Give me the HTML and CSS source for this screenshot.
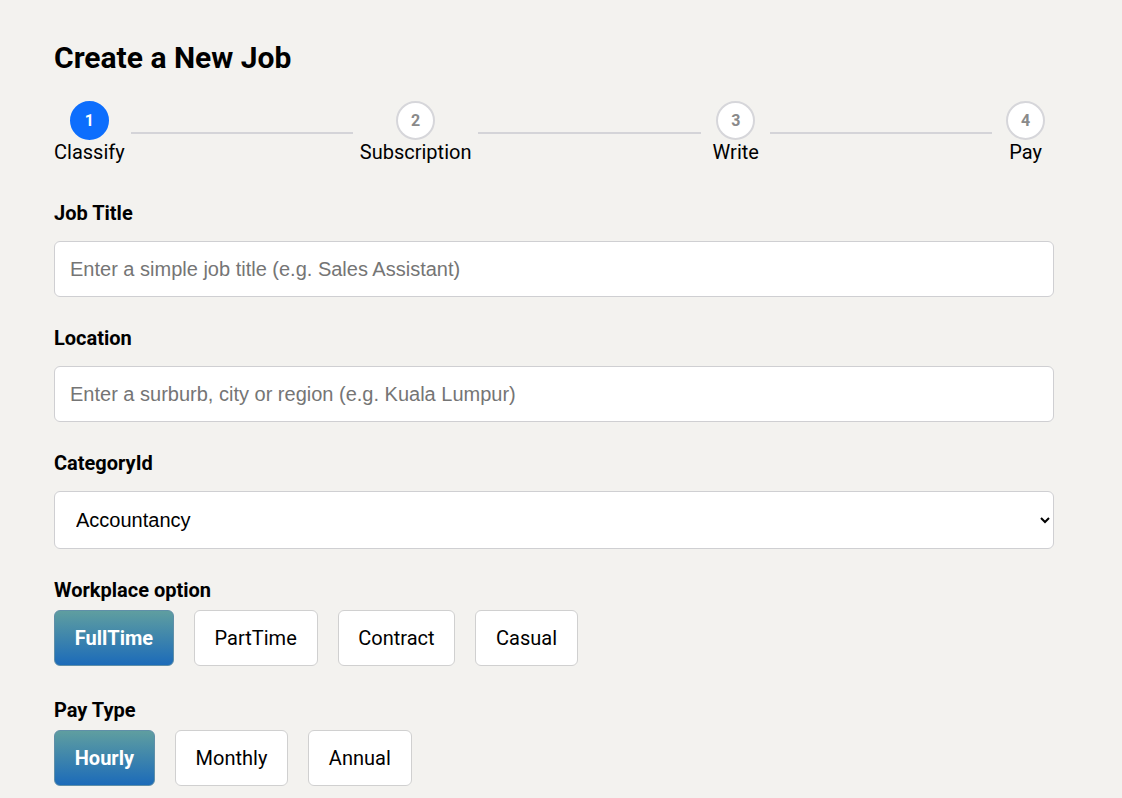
FILE: index.html
```html
<!DOCTYPE html>
<html lang="en">
<head>
<meta charset="utf-8">
<title>Create a New Job</title>
<link rel="stylesheet" href="styles.css">
</head>
<body>
<main class="page">
  <h1 class="title">Create a New Job</h1>

  <div class="stepper">
    <div class="step active"><span class="dot">1</span><span class="step-label">Classify</span></div>
    <div class="connector c1"></div>
    <div class="step"><span class="dot">2</span><span class="step-label">Subscription</span></div>
    <div class="connector c2"></div>
    <div class="step"><span class="dot">3</span><span class="step-label">Write</span></div>
    <div class="connector c3"></div>
    <div class="step"><span class="dot">4</span><span class="step-label">Pay</span></div>
  </div>

  <div class="field">
    <label class="label" for="title">Job Title</label>
    <input class="input" id="title" type="text" placeholder="Enter a simple job title (e.g. Sales Assistant)">
  </div>

  <div class="field">
    <label class="label" for="loc">Location</label>
    <input class="input" id="loc" type="text" placeholder="Enter a surburb, city or region (e.g. Kuala Lumpur)">
  </div>

  <div class="field">
    <label class="label" for="cat">CategoryId</label>
    <select class="select" id="cat">
      <option>Accountancy</option>
    </select>
  </div>

  <div class="field tight">
    <div class="label">Workplace option</div>
    <div class="options">
      <button class="opt selected" type="button">FullTime</button>
      <button class="opt" type="button">PartTime</button>
      <button class="opt" type="button">Contract</button>
      <button class="opt" type="button">Casual</button>
    </div>
  </div>

  <div class="field tight">
    <div class="label">Pay Type</div>
    <div class="options">
      <button class="opt selected" type="button">Hourly</button>
      <button class="opt" type="button">Monthly</button>
      <button class="opt" type="button">Annual</button>
    </div>
  </div>
</main>
</body>
</html>
```

FILE: styles.css
```css
* { box-sizing: border-box; }

html, body {
  margin: 0;
  padding: 0;
  background: #f3f2ef;
}

body {
  font-family: Roboto, "Liberation Sans", Arial, sans-serif;
  color: #000;
}

.page {
  width: 1000px;
  margin-left: 54px;
  padding-top: 38px;
}

.title {
  margin: 0;
  font-size: 30px;
  font-weight: 700;
  line-height: 40px;
}

.stepper {
  display: flex;
  align-items: center;
  margin-top: 23px;
  padding-right: 9px;
}

.step {
  display: flex;
  flex-direction: column;
  align-items: center;
}

.dot {
  width: 39px;
  height: 39px;
  border-radius: 50%;
  border: 2px solid #d6d6da;
  background: #fff;
  color: #8a8a8a;
  font-weight: 700;
  font-size: 16px;
  display: flex;
  align-items: center;
  justify-content: center;
}

.step.active .dot {
  background: #0d6efd;
  border-color: #0d6efd;
  color: #fff;
}

.step-label {
  font-size: 20px;
  line-height: 24px;
}

.connector {
  flex: 1;
  height: 2px;
  background: #d4d4d8;
}

.connector.c1 { margin: 0 7px 0 6px; }
.connector.c2 { margin: 0 12px 0 7px; }
.connector.c3 { margin: 0 14px 0 11px; }

.field {
  margin-top: 37px;
}

.field + .field { margin-top: 29px; }
.field.tight + .field.tight { margin-top: 32px; }

.label {
  display: block;
  font-size: 20px;
  font-weight: 700;
  line-height: 24px;
  margin-bottom: 16px;
}

.tight .label { margin-bottom: 8px; }

.input {
  display: block;
  width: 100%;
  height: 56px;
  border: 1px solid #cfcfd2;
  border-radius: 6px;
  background: #fff;
  padding: 0 15px;
  font-family: "Liberation Sans", Arial, sans-serif;
  font-size: 20px;
  color: #000;
  outline: none;
}

.input::placeholder { color: #757575; }

.select {
  display: block;
  width: 100%;
  height: 58px;
  border: 1px solid #cfcfd2;
  border-radius: 6px;
  background: #fff;
  padding: 0 16px 0 17px;
  font-family: "Liberation Sans", Arial, sans-serif;
  font-size: 20px;
  color: #000;
  outline: none;
}

.options {
  display: flex;
  gap: 20px;
}

.opt {
  height: 56px;
  padding: 0 19.75px;
  border: 1px solid #d0d0d0;
  border-radius: 6px;
  background: #fff;
  font-family: Roboto, "Liberation Sans", Arial, sans-serif;
  font-size: 20px;
  color: #000;
  cursor: pointer;
}

.opt.selected {
  background: linear-gradient(to bottom, #5f9ea0, #1c6bb9);
  border-color: #5f8fa8;
  color: #fff;
  font-weight: 700;
}
```
